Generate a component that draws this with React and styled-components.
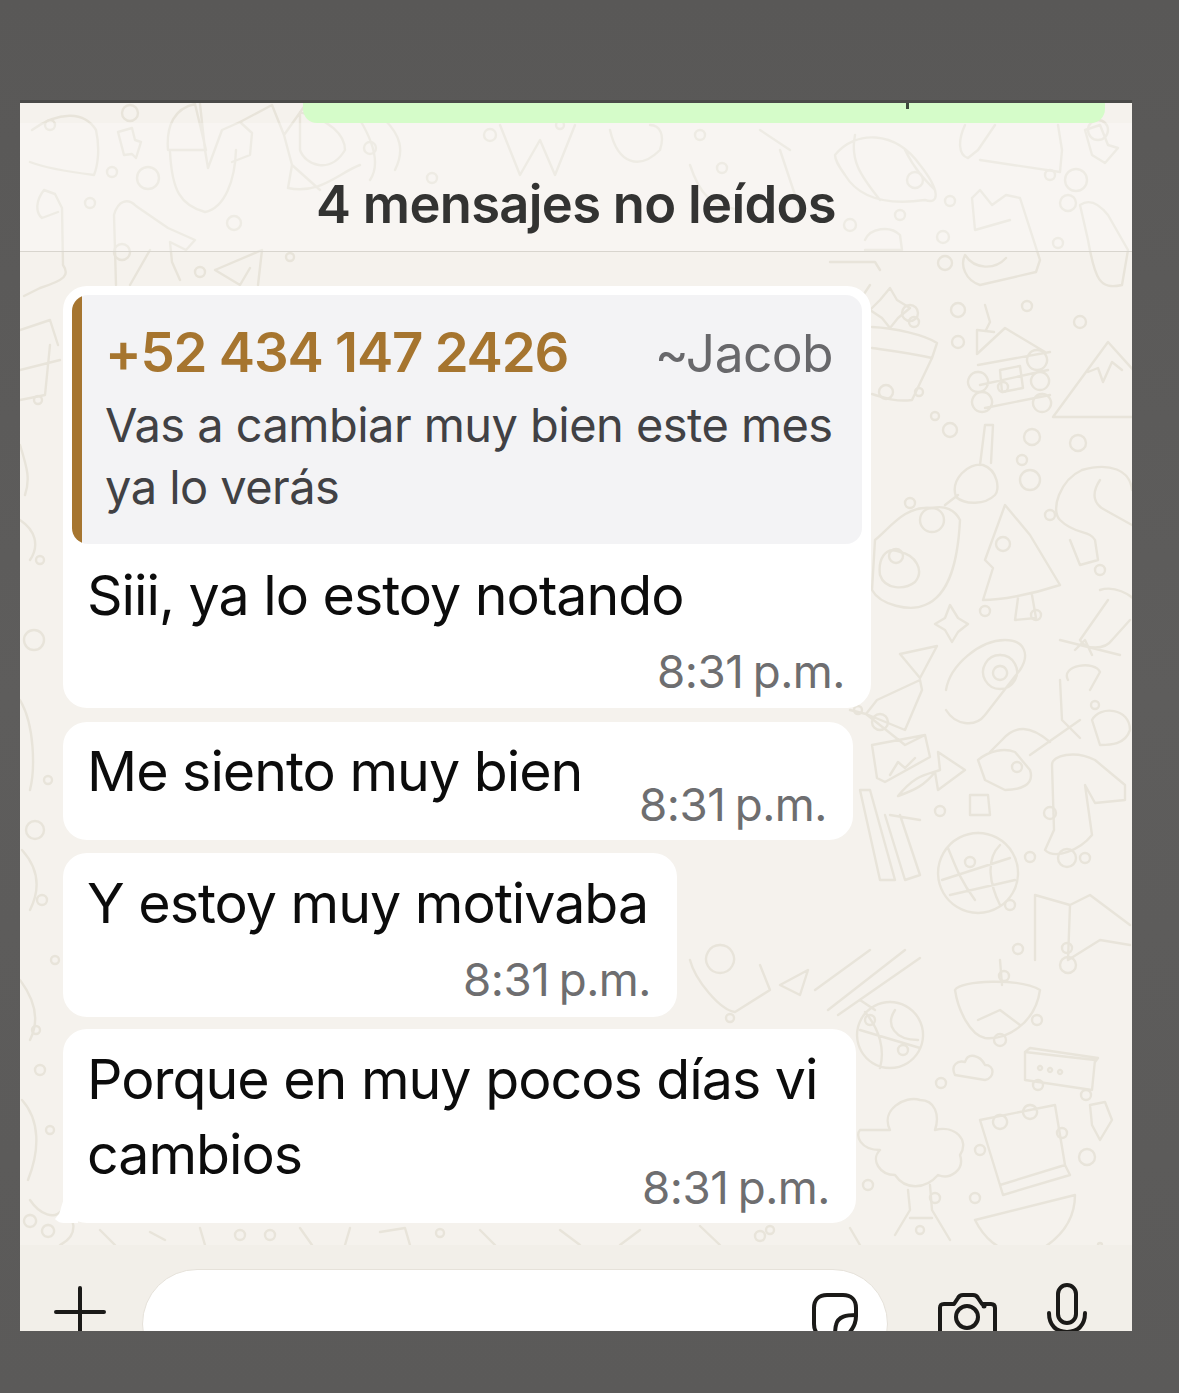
import React from "react";
import styled, { createGlobalStyle } from "styled-components";

const Global = createGlobalStyle`
  html, body { margin: 0; padding: 0; background: #5c5b5a; }
  body { height: 1393px; overflow: hidden; font-family: Inter, "Liberation Sans", sans-serif; }
  #root { height: 1393px; }
`;

const Page = styled.div`
  height: 1393px;
  padding: 103px 47px 0 20px;
  box-sizing: border-box;
  background: linear-gradient(180deg, #595857 0%, #5e5d5c 50%, #5b5a59 100%);
`;

const Screen = styled.main`
  width: 1112px;
  height: 1228px;
  overflow: hidden;
  display: flex;
  flex-direction: column;
  background: #f2efe9;
  box-shadow: 0 -3px 0 #4a4a48;
`;

const Chat = styled.section`
  position: relative;
  height: 1142px;
  flex: none;
  background: #f5f2ed;
`;

const Wallpaper = styled.svg`
  position: absolute;
  left: 0;
  top: 0;
  width: 1112px;
  height: 1142px;
  fill: none;
  stroke: #e8e4da;
  stroke-width: 2.4;
  stroke-linecap: round;
  stroke-linejoin: round;
`;

const ChatFlow = styled.div`
  position: relative;
  display: flex;
  flex-direction: column;
`;

const OutgoingStub = styled.div`
  position: relative;
  margin-left: 283px;
  width: 802px;
  height: 20px;
  background: #d5fcc9;
  border-radius: 0 0 14px 14px;
  &::after {
    content: "";
    position: absolute;
    left: 603px;
    top: 0;
    width: 3px;
    height: 6px;
    background: #3d4a3c;
  }
`;

const UnreadBanner = styled.div`
  height: 129px;
  display: flex;
  align-items: center;
  justify-content: center;
  padding-top: 34px;
  box-sizing: border-box;
  border-bottom: 1px solid #d8d5ce;
  background: rgba(255, 255, 255, 0.28);
  color: #333332;
  font-size: 52.5px;
  font-weight: 600;
  letter-spacing: -0.7px;
  line-height: 60px;
`;

const Messages = styled.div`
  display: flex;
  flex-direction: column;
  align-items: flex-start;
  margin: 34px 0 0 43px;
`;

const Bubble = styled.article`
  position: relative;
  box-sizing: border-box;
  width: ${(p) => p.$width}px;
  height: ${(p) => p.$height}px;
  margin-top: ${(p) => p.$gap || 0}px;
  background: #fff;
  border-radius: 24px;
  padding: ${(p) => p.$pad};
  display: flex;
  flex-direction: column;
  ${(p) =>
    p.$tail &&
    `&::before {
      content: "";
      position: absolute;
      left: -11px;
      bottom: 0;
      width: 26px;
      height: 24px;
      background: #fff;
      border-radius: 0 0 0 12px;
      clip-path: polygon(45% 0, 100% 0, 100% 100%, 0 100%, 28% 60%);
    }`}
`;

const Quote = styled.div`
  box-sizing: border-box;
  height: 249px;
  margin-bottom: 13px;
  border-radius: 16px;
  background: linear-gradient(to right, #a6752f 10px, #f3f3f5 10px);
  padding: 32px 29px 0 33px;
  flex: none;
`;

const QuoteHead = styled.div`
  display: flex;
  justify-content: space-between;
  align-items: baseline;
  line-height: 50px;
`;

const QuoteSender = styled.span`
  color: #a6752f;
  font-size: 54.5px;
  font-weight: 600;
  letter-spacing: -1.2px;
`;

const QuoteAlias = styled.span`
  color: #68686b;
  font-size: 51.5px;
  letter-spacing: -0.6px;
`;

const QuoteBody = styled.p`
  margin: 16px 0 0;
  color: #414144;
  font-size: 47px;
  line-height: 62px;
  letter-spacing: -0.55px;
  white-space: nowrap;
`;

const ReplyContent = styled.div`
  display: flex;
  flex-direction: column;
  padding: 0 17px 0 15px;
`;

const MessageText = styled.p`
  margin: 0;
  color: #0c0c0c;
  font-size: 55.5px;
  line-height: 75px;
  letter-spacing: -1px;
`;

const LastLine = styled.div`
  display: flex;
  justify-content: space-between;
  align-items: flex-start;
`;

const Time = styled.time`
  display: block;
  align-self: flex-end;
  flex: none;
  margin-top: ${(p) => p.$top}px;
  color: #6e6e70;
  font-size: 45.7px;
  line-height: 52px;
  letter-spacing: -0.5px;
  word-spacing: -3px;
  white-space: nowrap;
`;

const Composer = styled.footer`
  flex: 1;
  display: flex;
  align-items: flex-start;
  padding-left: 34px;
  background: #f2efe9;
`;

const IconSlot = styled.span`
  display: block;
  flex: none;
  width: ${(p) => p.$w}px;
  margin-top: ${(p) => p.$top}px;
  margin-left: ${(p) => p.$left || 0}px;
  color: #1b1a18;
  svg { display: block; fill: none; stroke: currentColor; stroke-width: 4; stroke-linecap: round; stroke-linejoin: round; }
`;

const InputField = styled.div`
  flex: none;
  box-sizing: border-box;
  width: 746px;
  height: 110px;
  margin: 24px 0 0 36px;
  padding: 23px 29px 0 0;
  display: flex;
  justify-content: flex-end;
  background: #fff;
  border: 1.5px solid #e6e2da;
  border-radius: 55px;
`;

const dots = [
  [50,125,5],[130,113,8],[112,172,5],[148,178,11],[90,203,5],[122,252,8],[234,223,7],[290,257,4],[200,272,5],
  [370,148,6],[432,178,5],[490,135,6],[560,125,4],[700,135,5],[722,168,5],[850,225,6],[900,215,5],[915,180,8],
  [1050,175,5],[1068,203,8],[1098,130,10],[1076,180,11],[950,201,5],[943,237,6],[945,263,7],[1058,243,5],
  [910,313,8],[958,342,6],[914,322,5],[1027,306,5],[958,310,7],[1080,322,6],[1003,387,5],[886,392,7],[935,416,4],
  [919,392,4],[950,430,7],[1032,437,8],[1078,443,8],[932,520,12],[1022,460,5],[1030,480,10],[1050,515,5],
  [896,556,7],[1003,544,7],[910,503,5],[1036,615,5],[1100,570,5],[985,611,5],[1095,705,4],
  [880,722,8],[858,710,4],[1017,767,5],[1050,813,6],[1067,858,9],[1030,857,5],[1085,858,5],[940,811,5],[970,862,5],
  [1010,905,5],[1004,976,5],[1018,949,5],[1067,948,5],[1068,965,8],[1037,1020,5],[1000,1040,6],[1038,1085,5],
  [1086,1095,5],[941,1083,5],[1062,1133,5],[1087,1157,8],[980,1150,5],[935,1198,5],[975,1198,5],[870,1020,5],
  [903,1050,5],[840,1098,5],[868,1185,5],[1100,1245,2],
  [34,640,10],[40,560,4],[48,780,4],[35,830,9],[55,960,4],[40,1070,5],[50,1130,4],[36,1030,4],[42,900,5],[38,400,4],
  [730,1018,4],[240,1235,5],[270,1235,5],[440,1233,4],[760,1236,5],[920,1230,4],[770,1230,4]
];

const doodles = [
  "M32 130 C60 110 85 112 96 130 C100 148 98 165 94 175 C70 172 45 168 30 162",
  "M118 132 L132 128 L135 140 L141 142 L136 158 L132 154 L124 155 Z",
  "M168 150 C166 125 175 108 195 104 L206 150 Z M170 152 C172 190 180 205 205 212 C225 208 235 180 236 150",
  "M200 104 L205 150 L208 168 L222 130 L240 122 L252 133 L250 155 L232 162 M240 122 L272 105 L284 135 L292 165 L288 188",
  "M284 135 L306 104 M292 165 L320 190 M288 188 C320 195 340 172 360 165",
  "M44 190 L55 194 L62 208 L63 265 C70 275 65 280 40 288 L24 296 M44 190 C36 200 35 212 42 218 L58 212",
  "M114 215 C118 200 128 198 136 206 L168 228 L195 240 L186 250 L170 242 L172 262 L180 280 M114 215 L116 285 M150 250 L130 285",
  "M215 270 L262 250 L258 285 M215 270 L240 285 L250 268",
  "M300 112 C330 120 345 135 345 150 C330 175 305 165 300 150 Z",
  "M360 120 C375 145 380 165 370 180 M385 120 C400 135 405 150 395 170",
  "M500 125 L520 175 L540 140 L555 175 L575 125",
  "M610 130 C618 165 640 170 660 150 C665 135 660 125 650 125",
  "M690 165 C700 195 710 205 740 210 M780 150 L800 210 M760 130 L790 150",
  "M835 155 C855 130 895 130 920 165 C940 190 940 205 925 200 C890 205 860 200 845 175 C838 165 835 160 835 155 Z M855 135 C850 160 860 175 880 200 M905 150 C915 170 925 180 935 190",
  "M965 125 C958 140 958 155 968 158 L978 150 L995 125 M980 160 L1060 172 L1062 150 L1058 125",
  "M1085 130 L1100 125 L1108 145 L1118 148 L1105 163 L1092 155 Z",
  "M972 198 L980 190 L992 205 L1006 195 L1020 198 L1040 260 L1036 272 L980 285 C965 280 960 265 965 255 C975 270 995 270 1006 258 M972 198 L975 230 L1010 220",
  "M1080 205 C1090 198 1100 205 1108 215 L1128 250 L1122 285 C1100 290 1095 280 1088 240 Z",
  "M865 240 C870 228 890 225 900 235 L902 250 L865 250",
  "M830 262 L875 262 L880 270 M870 285 L860 300",
  "M880 300 L890 288 L897 300 L910 308 L898 318 L890 328 L882 318 L870 310 Z",
  "M20 330 L50 320 L58 345 M20 370 L60 360 M20 400 L45 395 L50 345",
  "M20 445 C28 470 30 480 25 495 M20 520 C35 530 40 545 30 560",
  "M872 327 C895 328 925 335 937 343 L932 358 C905 352 885 350 872 348 M932 358 L912 400 C895 402 885 398 872 394",
  "M977 354 L1005 328 L1045 352 M977 354 L977 330 L994 332 M985 305 L990 322 L986 330",
  "M978 365 L1050 352 M980 385 L1048 370 M985 408 L1050 395",
  "M1000 370 L1020 366 L1023 388 L1002 392 Z",
  "M978 372 a10 10 0 1 0 .1 0 M982 392 a10 10 0 1 0 .1 0 M1037 350 a10 10 0 1 0 .1 0 M1040 372 a9 9 0 1 0 .1 0 M1042 394 a9 9 0 1 0 .1 0",
  "M1053 417 L1108 342 L1135 372 M1053 417 L1135 417 M1088 372 L1098 368 L1103 382 L1112 362 L1122 370",
  "M980 465 L985 425 L993 425 L991 463 M956 497 C950 480 968 462 983 465 C998 470 1000 490 995 495 C985 505 965 505 956 497",
  "M958 495 L945 505 M932 508 C905 505 890 528 875 540 L872 590 C880 605 910 612 925 605 C950 595 958 560 960 520 C955 510 945 505 932 508 Z",
  "M900 552 C885 545 878 560 880 575 C885 590 905 590 915 582 C925 570 915 555 900 552 Z",
  "M1005 505 L985 560 L993 568 L983 600 C1000 600 1030 595 1060 585 L1045 560 L1030 535 Z M1018 598 L1015 620 L1036 618 L1032 595",
  "M1082 470 C1060 480 1050 510 1060 520 C1075 535 1090 530 1095 540 L1098 560 L1080 565 L1070 540 M1082 470 C1110 462 1130 470 1132 490 M1100 480 C1090 495 1095 505 1105 510 L1132 525",
  "M1100 590 C1115 585 1130 595 1135 600 M1108 600 L1080 640 C1085 650 1105 650 1112 640 L1130 620",
  "M950 605 L958 618 L968 624 L958 632 L952 642 L945 630 L935 624 L945 618 Z",
  "M900 654 L937 646 L920 678 Z",
  "M946 690 C950 665 980 640 1005 640 C1025 640 1030 655 1020 670 L985 715 C975 728 955 725 946 710",
  "M1000 655 a17 17 0 1 0 .1 0 M1000 666 a7 7 0 1 0 .1 0",
  "M1075 650 L1085 640 L1092 655 M1068 680 C1060 665 1095 660 1100 672 L1090 690",
  "M1060 640 L1120 655",
  "M877 700 L920 680 L922 690 L905 730 L866 714 Z M850 710 L866 714 L905 745 L925 735",
  "M872 745 L925 735 L930 757 L885 782 L877 778 Z M890 775 L898 762 L905 768 L915 758",
  "M898 796 C915 775 925 775 940 770 L938 752 L965 770 L938 790 L935 772 C925 785 915 790 898 796 Z",
  "M978 760 C990 750 1005 748 1015 752 L1030 770 C1035 785 1020 790 1005 790 L985 780 Z M990 752 L1002 740 C1015 725 1030 725 1050 742 M1030 755 L1080 720",
  "M1052 765 C1052 755 1075 750 1095 760 L1125 785 L1125 800 L1095 803 L1085 785 L1092 835 C1080 850 1055 860 1045 850 L1054 830 L1052 765 Z",
  "M1092 720 C1100 705 1130 708 1130 730 C1125 745 1110 745 1100 745 Z",
  "M1060 680 L1062 720 L1080 738",
  "M970 795 L988 795 L990 815 L970 815 Z",
  "M978 833 a40 40 0 1 0 .1 0 M948 848 C955 865 960 880 975 900 M1000 845 C985 860 990 885 1000 905 M942 880 L1010 858 M950 895 L1015 880",
  "M860 790 L880 880 L895 880 L870 790 Z M885 815 L905 880 L920 875 L900 815 M890 815 L920 820",
  "M1035 895 L1035 960 M1035 895 L1070 905 L1090 895 L1130 925 M1070 905 L1068 960 M1068 960 L1100 940 L1130 945",
  "M828 1010 L905 950 M838 1015 L920 958 M860 1000 L875 1010",
  "M815 990 L870 950",
  "M690 960 C695 980 720 1010 735 1012 L770 990 L760 965 M720 945 a14 14 0 1 0 .1 0",
  "M780 985 L808 970 L800 995 Z",
  "M955 990 C960 980 1020 978 1040 990 C1035 1025 1005 1040 985 1038 C970 1035 958 1010 955 990 Z M978 1020 L1000 1010 L1020 1025 M1000 960 L1002 985",
  "M890 1002 a33 33 0 1 0 .1 0 M865 1012 C880 1030 885 1050 880 1068 M895 1010 C885 1025 895 1040 918 1040 M860 1030 L920 1048",
  "M955 1075 C950 1065 958 1060 965 1062 C968 1052 980 1055 985 1065 C995 1065 995 1078 985 1080 Z",
  "M1025 1052 L1095 1060 L1092 1090 L1025 1080 Z M1025 1052 L1030 1048 L1098 1058 L1095 1062",
  "M1040 1066 a2 2 0 1 0 .1 0 M1050 1068 a2 2 0 1 0 .1 0 M1060 1070 a2 2 0 1 0 .1 0",
  "M890 1130 C880 1110 905 1095 920 1100 C935 1100 940 1115 935 1130 C955 1125 970 1140 960 1155 C965 1170 950 1180 938 1175 C925 1190 905 1190 895 1175 C880 1175 870 1160 880 1150 C860 1150 855 1135 860 1130 Z",
  "M908 1190 L910 1210 L895 1235 M930 1185 L932 1210 L950 1240 M910 1218 L932 1218",
  "M980 1120 L1055 1105 L1065 1165 L1000 1185 Z M1000 1185 L1003 1195 L1070 1175 L1065 1165",
  "M1000 1115 a7 7 0 1 0 .1 0 M1030 1105 a7 7 0 1 0 .1 0",
  "M1090 1105 L1105 1102 L1112 1120 L1100 1140 L1092 1125 Z",
  "M975 1220 L1075 1195 C1075 1215 1065 1235 1040 1250 M975 1220 C985 1240 1000 1250 1010 1250",
  "M20 700 C35 725 35 770 30 790 M22 850 C40 870 40 890 30 910 M20 980 C35 1000 40 1020 30 1040",
  "M22 1100 C40 1120 40 1150 28 1180 M30 1200 C40 1215 55 1220 62 1210 C75 1215 80 1235 60 1245 M30 1215 a6 6 0 1 0 .1 0 M48 1225 a6 6 0 1 0 .1 0",
  "M300 1228 L312 1245 M350 1228 L345 1245 M380 1232 L405 1228 L410 1245 M480 1230 L495 1245 M560 1230 L580 1245 M640 1230 L620 1245 M700 1226 L720 1245 M850 1228 L860 1245",
  "M100 1230 L115 1245 M150 1232 L165 1240 M200 1228 L205 1245"
].join(" ");

const PlusIcon = () => (
  <svg width="52" height="60" viewBox="0 0 52 60"><path d="M26 2v58M2 26h48" /></svg>
);

const StickerIcon = () => (
  <svg width="46" height="60" viewBox="0 0 46 60">
    <path d="M15 2h16c8 0 13 5 13 13v8C44 32 40 38 33 44H15C7 44 2 39 2 31V15C2 7 7 2 15 2Z" />
    <path d="M44 22c-9 0-18 1-20 10-1 4-1 8-1 12" />
  </svg>
);

const CameraIcon = () => (
  <svg width="60" height="60" viewBox="0 0 60 60">
    <path d="M3 50V17c0-3 1-4 4-4h10l4-6c1-2 2-3 5-3h10c2 0 4 1 5 3l4 6h9c2 0 4 1 4 4v33" />
    <circle cx="30" cy="26" r="11" />
    <circle cx="47" cy="15" r="2.5" fill="currentColor" stroke="none" />
  </svg>
);

const MicIcon = () => (
  <svg width="40" height="60" viewBox="0 0 40 60">
    <rect x="11" y="2" width="18" height="38" rx="9" />
    <path d="M2 30c0 12 7 19 18 19s18-7 18-19" />
  </svg>
);

const App = () => (
  <>
    <Global />
    <Page>
      <Screen>
        <Chat>
          <Wallpaper viewBox="20 103 1112 1142">
            <path d={doodles} />
            {dots.map(([x, y, r], i) => (
              <circle key={i} cx={x} cy={y} r={r} />
            ))}
          </Wallpaper>
          <ChatFlow>
            <OutgoingStub />
            <UnreadBanner>4 mensajes no leídos</UnreadBanner>
            <Messages>
              <Bubble $width={808} $height={422} $pad="9px 9px 0">
                <Quote>
                  <QuoteHead>
                    <QuoteSender>+52 434 147 2426</QuoteSender>
                    <QuoteAlias>~Jacob</QuoteAlias>
                  </QuoteHead>
                  <QuoteBody>Vas a cambiar muy bien este mes<br />ya lo verás</QuoteBody>
                </Quote>
                <ReplyContent>
                  <MessageText>Siii, ya lo estoy notando</MessageText>
                  <Time $top={14}>8:31 p.m.</Time>
                </ReplyContent>
              </Bubble>
              <Bubble $gap={14} $width={790} $height={118} $pad="11px 26px 0 24px">
                <LastLine>
                  <MessageText>Me siento muy bien</MessageText>
                  <Time $top={46}>8:31 p.m.</Time>
                </LastLine>
              </Bubble>
              <Bubble $gap={13} $width={614} $height={164} $pad="12px 26px 0 24px">
                <MessageText>Y estoy muy motivaba</MessageText>
                <Time $top={14}>8:31 p.m.</Time>
              </Bubble>
              <Bubble $tail $gap={12} $width={793} $height={194} $pad="12px 26px 0 24px">
                <MessageText>Porque en muy pocos días vi</MessageText>
                <LastLine>
                  <MessageText>cambios</MessageText>
                  <Time $top={46}>8:31 p.m.</Time>
                </LastLine>
              </Bubble>
            </Messages>
          </ChatFlow>
        </Chat>
        <Composer>
          <IconSlot $w={52} $top={41}><PlusIcon /></IconSlot>
          <InputField>
            <IconSlot $w={46} $top={0}><StickerIcon /></IconSlot>
          </InputField>
          <IconSlot $w={60} $left={49} $top={46}><CameraIcon /></IconSlot>
          <IconSlot $w={40} $left={50} $top={38}><MicIcon /></IconSlot>
        </Composer>
      </Screen>
    </Page>
  </>
);

export default App;
